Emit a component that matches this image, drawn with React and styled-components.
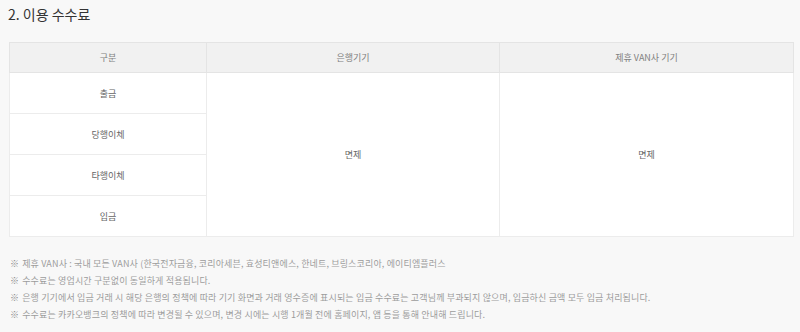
import React from 'react';
import styled, { createGlobalStyle } from "styled-components";

const GlobalStyle = createGlobalStyle`
    html, body {
        margin: 0;
        padding: 0;
        background-color: #f8f8f8;
    }
    body {
        font-family: "Noto Sans CJK KR", "Noto Sans", sans-serif;
    }
`;

const FeeSection = styled.section`
    width: 800px;
    height: 332px;
    padding: 4px 6px 0 9px;
    box-sizing: border-box;
`;

const Title = styled.h2`
    margin: 0 0 0 -1px;
    font-size: 14px;
    font-weight: 400;
    line-height: 20px;
    color: #333;
`;

const FeeTable = styled.table`
    width: 785px;
    margin-top: 18px;
    border-collapse: collapse;
    table-layout: fixed;
    background-color: #fff;
    border: 1px solid #e4e4e4;

    th, td {
        border: 1px solid #ececec;
        text-align: center;
        font-size: 9px;
        color: #666;
        padding: 0;
    }

    th {
        height: 29px;
        font-weight: 400;
        background-color: #f1f1f1;
        color: #808080;
        border-color: #e4e4e4;
    }

    td {
        height: 40px;
    }
`;

const Notes = styled.ul`
    list-style: none;
    margin: 18px 0 0 1px;
    padding: 0;

    li {
        font-size: 9px;
        line-height: 17px;
        color: #9c9c9c;
        letter-spacing: 0.15px;
    }

    li::before {
        content: "※";
        margin-right: 3px;
        color: #888;
    }
`;

const rows = ["출금", "당행이체", "타행이체", "입금"];

const notes = [
    "제휴 VAN사 : 국내 모든 VAN사 (한국전자금융, 코리아세븐, 효성티앤에스, 한네트, 브링스코리아, 에이티엠플러스",
    "수수료는 영업시간 구분없이 동일하게 적용됩니다.",
    "은행 기기에서 입금 거래 시 해당 은행의 정책에 따라 기기 화면과 거래 영수증에 표시되는 입금 수수료는 고객님께 부과되지 않으며, 입금하신 금액 모두 입금 처리됩니다.",
    "수수료는 카카오뱅크의 정책에 따라 변경될 수 있으며, 변경 시에는 시행 1개월 전에 홈페이지, 앱 등을 통해 안내해 드립니다.",
];

const App = () => {
    return (
        <>
            <GlobalStyle />
            <FeeSection>
                <Title>2. 이용 수수료</Title>
                <FeeTable>
                    <colgroup>
                        <col style={{ width: 197 }} />
                        <col style={{ width: 293 }} />
                        <col />
                    </colgroup>
                    <thead>
                        <tr>
                            <th>구분</th>
                            <th>은행기기</th>
                            <th>제휴 VAN사 기기</th>
                        </tr>
                    </thead>
                    <tbody>
                        {rows.map((label, i) => (
                            <tr key={label}>
                                <td>{label}</td>
                                {i === 0 && <td rowSpan={4}>면제</td>}
                                {i === 0 && <td rowSpan={4}>면제</td>}
                            </tr>
                        ))}
                    </tbody>
                </FeeTable>
                <Notes>
                    {notes.map((n) => (
                        <li key={n}>{n}</li>
                    ))}
                </Notes>
            </FeeSection>
        </>
    )
};

export default App;
